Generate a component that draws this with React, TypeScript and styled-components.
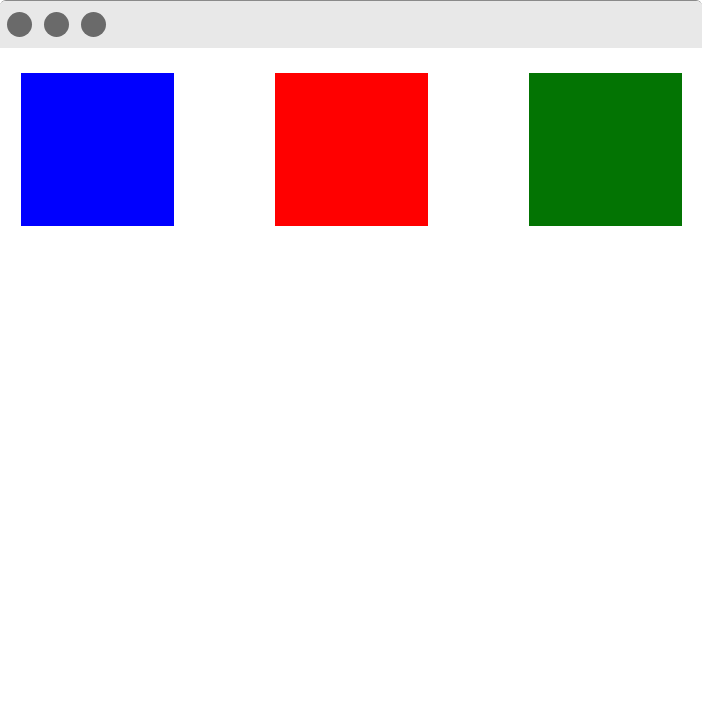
import React from "react";
import styled, { createGlobalStyle } from "styled-components";

const Global = createGlobalStyle`
  html, body { margin: 0; padding: 0; background: #ffffff; }
  body { font-family: "Liberation Sans", Arial, sans-serif; }
`;

const Window = styled.div`
  width: 702px;
  height: 706px;
  box-sizing: border-box;
  border-top: 1px solid #8a8a8a;
  border-radius: 6px 6px 0 0;
  overflow: hidden;
  background: #ffffff;
  display: flex;
  flex-direction: column;
`;

const TitleBar = styled.div`
  height: 47px;
  background: #e8e8e8;
  display: flex;
  align-items: center;
  gap: 12px;
  padding: 0 7px;
  flex-shrink: 0;
`;

const Dot = styled.span`
  width: 25px;
  height: 25px;
  border-radius: 50%;
  background: #6a6a6a;
  display: block;
`;

const Row = styled.div`
  display: flex;
  justify-content: space-between;
  padding: 25px 20px 0 21px;
`;

const Square = styled.div<{ $color: string }>`
  width: 153px;
  height: 153px;
  background: ${(p) => p.$color};
`;

export default function App() {
  return (
    <>
      <Global />
      <Window>
        <TitleBar>
          <Dot />
          <Dot />
          <Dot />
        </TitleBar>
        <Row>
          <Square $color="#0000ff" />
          <Square $color="#ff0000" />
          <Square $color="#037403" />
        </Row>
      </Window>
    </>
  );
}
